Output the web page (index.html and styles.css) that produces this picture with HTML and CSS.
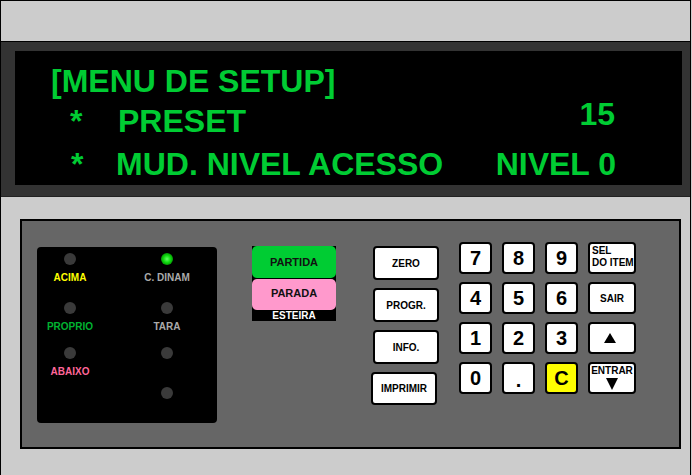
FILE: index.html
```html
<!DOCTYPE html>
<html lang="pt">
<head>
<meta charset="utf-8">
<title>Menu de Setup</title>
<link rel="stylesheet" href="styles.css">
</head>
<body>
<div class="frame">
  <div class="topbar"></div>
  <div class="band">
    <div class="screen">
      <div class="line line-1">
        <span class="title">[MENU DE SETUP]</span>
      </div>
      <div class="line line-2">
        <span class="star">*</span>
        <span class="item item-preset">PRESET</span>
        <span class="value value-raised">15</span>
      </div>
      <div class="line line-3">
        <span class="star star-3">*</span>
        <span class="item item-nivel">MUD. NIVEL ACESSO</span>
        <span class="value">NIVEL 0</span>
      </div>
    </div>
  </div>
  <div class="panel">
    <div class="leds">
      <div class="led-cell"><span class="led"></span><span class="led-label lbl-yellow">ACIMA</span></div>
      <div class="led-cell"><span class="led led-on"></span><span class="led-label lbl-grey">C. DINAM</span></div>
      <div class="led-cell"><span class="led"></span><span class="led-label lbl-green">PROPRIO</span></div>
      <div class="led-cell"><span class="led"></span><span class="led-label lbl-grey">TARA</span></div>
      <div class="led-cell"><span class="led"></span><span class="led-label lbl-pink">ABAIXO</span></div>
      <div class="led-cell"><span class="led"></span></div>
      <div class="led-cell"></div>
      <div class="led-cell"><span class="led"></span></div>
    </div>

    <div class="belt">
      <div class="belt-btn belt-start">PARTIDA</div>
      <div class="belt-btn belt-stop">PARADA</div>
      <div class="belt-label">ESTEIRA</div>
    </div>

    <div class="fn-col">
      <div class="key key-fn">ZERO</div>
      <div class="key key-fn">PROGR.</div>
      <div class="key key-fn">INFO.</div>
      <div class="key key-fn key-shift">IMPRIMIR</div>
    </div>

    <div class="numpad">
      <div class="key key-num">7</div>
      <div class="key key-num">8</div>
      <div class="key key-num">9</div>
      <div class="key key-side key-sel"><span>SEL</span><span>DO ITEM</span></div>
      <div class="key key-num">4</div>
      <div class="key key-num">5</div>
      <div class="key key-num">6</div>
      <div class="key key-side">SAIR</div>
      <div class="key key-num">1</div>
      <div class="key key-num">2</div>
      <div class="key key-num">3</div>
      <div class="key key-side key-up">
        <svg class="tri" width="12" height="10" viewBox="0 0 12 10"><polygon points="6,0 12,10 0,10" fill="#000"/></svg>
      </div>
      <div class="key key-num">0</div>
      <div class="key key-num key-dot">.</div>
      <div class="key key-num key-clear">C</div>
      <div class="key key-side key-enter">
        <span>ENTRAR</span>
        <svg class="tri" width="12" height="12" viewBox="0 0 12 12"><polygon points="0,0 12,0 6,12" fill="#000"/></svg>
      </div>
    </div>
  </div>
</div>
</body>
</html>
```
FILE: styles.css
```css
* { box-sizing: border-box; }

html, body {
  margin: 0;
  padding: 0;
  background: #cccccc;
  overflow: hidden;
}

body {
  font-family: "Liberation Sans", Arial, sans-serif;
  font-weight: bold;
}

.frame {
  width: 691px;
  height: 480px;
  border: 1px solid #000;
  background: #cccccc;
}

.topbar {
  height: 40px;
}

/* ---------- display ---------- */
.band {
  background: #333333;
  border-top: 1px solid #000;
  border-bottom: 1px solid #222;
  padding: 9px 8px 11px 14px;
}

.screen {
  background: #000;
  height: 134px;
  padding: 10px 66px 0 0;
  color: #00cc33;
  font-size: 32px;
  line-height: 40px;
}

.line {
  display: flex;
  align-items: flex-start;
  white-space: nowrap;
}

.line-1 { height: 40px; padding-left: 36px; }
.line-2 { height: 43px; padding-left: 55px; }
.line-3 { height: 40px; padding-left: 56px; }

.star { width: 12px; }
.item-preset { margin-left: 36px; }
.item-nivel { margin-left: 33px; }

.value { margin-left: auto; }
.value-raised { line-height: 26px; margin-right: 1px; }

/* ---------- panel ---------- */
.panel {
  margin: 22px 0 0 19px;
  width: 661px;
  height: 230px;
  background: #666666;
  border: 2px solid #000;
  display: flex;
  align-items: flex-start;
  padding-top: 21px;
}

.leds {
  margin: 5px 0 0 15px;
  width: 180px;
  height: 176px;
  background: #000;
  border-radius: 4px;
  display: grid;
  grid-template-columns: 66px 66px;
  grid-template-rows: 49px 45px 40px 40px;
  column-gap: 31px;
  padding-top: 6px;
}

.led-cell {
  display: flex;
  flex-direction: column;
  align-items: center;
}

.led {
  width: 12px;
  height: 12px;
  border-radius: 50%;
  background: #3a3a3a;
}

.led-on {
  background: radial-gradient(circle, #66ff66 0%, #11dd11 40%, #008800 80%, #004400 100%);
}

.led-label {
  margin-top: 7px;
  font-size: 10px;
  line-height: 12px;
  white-space: nowrap;
}

.lbl-yellow { color: #ffff00; }
.lbl-grey { color: #aaaaaa; }
.lbl-green { color: #00b331; }
.lbl-pink { color: #ff6699; }

/* ---------- belt buttons ---------- */
.belt {
  margin: 4px 0 0 35px;
  width: 84px;
  height: 75px;
  background: #000;
  display: flex;
  flex-direction: column;
}

.belt-btn {
  height: 32px;
  border-radius: 5px;
  display: flex;
  align-items: center;
  justify-content: center;
  font-size: 11px;
  color: #111;
}

.belt-start {
  background: #00cc33;
  margin-bottom: 1px;
  height: 33px;
}

.belt-stop {
  background: #ff99cc;
  padding-bottom: 3px;
}

.belt-label {
  flex: 1;
  color: #fff;
  font-size: 10px;
  line-height: 11px;
  text-align: center;
}

/* ---------- keys ---------- */
.key {
  background: #fff;
  border: 2px solid #000;
  border-radius: 4px;
  color: #000;
  display: flex;
  align-items: center;
  justify-content: center;
}

.fn-col {
  margin: 4px 0 0 37px;
  display: flex;
  flex-direction: column;
  gap: 8px;
}

.key-fn {
  width: 66px;
  height: 34px;
  font-size: 10px;
}

.key-shift {
  margin-left: -2px;
  height: 33px;
}

.numpad {
  margin-left: 20px;
  display: grid;
  grid-template-columns: 33px 33px 33px 48px;
  grid-template-rows: repeat(4, 32px);
  column-gap: 10px;
  row-gap: 8px;
}

.key-num {
  font-size: 20px;
}

.key-dot {
  align-items: flex-end;
  line-height: 20px;
  padding-bottom: 2px;
}

.key-clear {
  background: #ffff00;
}

.key-side {
  font-size: 10px;
}

.key-sel {
  flex-direction: column;
  align-items: flex-start;
  justify-content: flex-start;
  padding: 1px 0 0 2px;
  line-height: 12px;
}

.key-up .tri {
  margin-left: -4px;
}

.key-enter {
  flex-direction: column;
  justify-content: flex-start;
  line-height: 12px;
  padding-top: 1px;
}

.key-enter .tri {
  margin-top: 1px;
}
```
